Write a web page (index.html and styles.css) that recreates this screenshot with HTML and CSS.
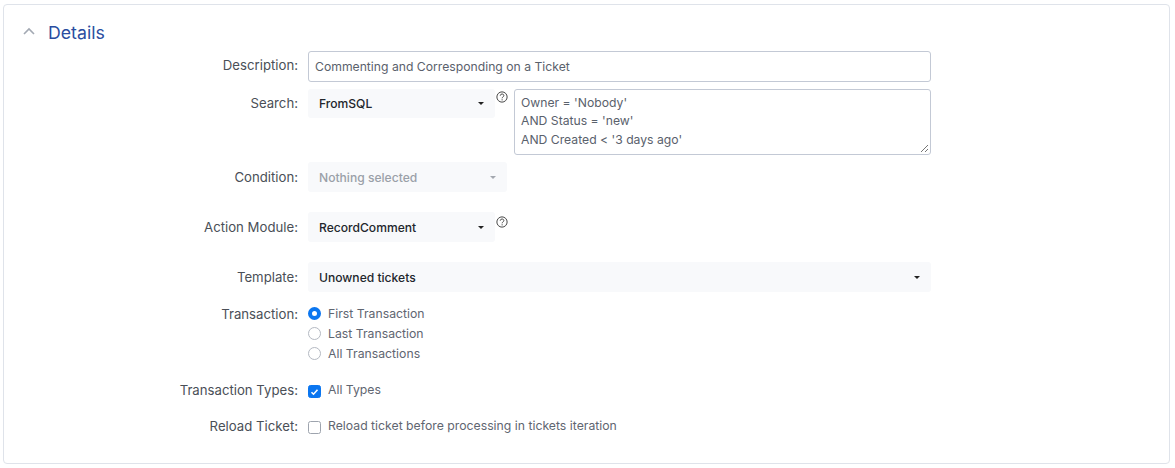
FILE: index.html
```html
<!DOCTYPE html>
<html lang="en">
<head>
<meta charset="utf-8">
<title>Details</title>
<link rel="stylesheet" href="styles.css">
</head>
<body>
<section class="card">
  <header class="card-head">
    <svg class="chev" width="14" height="9" viewBox="0 0 14 9"><path d="M2 7l5-5 5 5" fill="none" stroke="#a3a9b3" stroke-width="1.6"/></svg>
    <h2 class="title">Details</h2>
  </header>
  <div class="form">
    <div class="row row-desc">
      <div class="label">Description:</div>
      <div class="input">Commenting and Corresponding on a Ticket</div>
    </div>
    <div class="row row-search">
      <div class="label">Search:</div>
      <div class="select select-short"><span>FromSQL</span><i class="caret"></i></div>
      <svg class="help" width="12" height="12" viewBox="0 0 11 11"><circle cx="5.5" cy="5.5" r="4.7" fill="none" stroke="#444" stroke-width=".9"/><path d="M3.9 4.3c0-2.1 3.3-2 3.3-.1 0 1.2-1.6 1.2-1.6 2.5" fill="none" stroke="#444" stroke-width=".9"/><circle cx="5.6" cy="8.1" r=".6" fill="#444"/></svg>
      <div class="textarea">Owner = 'Nobody'<br>AND Status = 'new'<br>AND Created &lt; '3 days ago'
        <svg class="grip" width="9" height="9" viewBox="0 0 9 9"><path d="M1 8l7-7M5 8l3-3" stroke="#666" stroke-width=".9"/></svg>
      </div>
    </div>
    <div class="row row-cond">
      <div class="label">Condition:</div>
      <div class="select select-disabled"><span>Nothing selected</span><i class="caret"></i></div>
    </div>
    <div class="row row-action">
      <div class="label">Action Module:</div>
      <div class="select select-short select-tall"><span>RecordComment</span><i class="caret"></i></div>
      <svg class="help" width="12" height="12" viewBox="0 0 11 11"><circle cx="5.5" cy="5.5" r="4.7" fill="none" stroke="#444" stroke-width=".9"/><path d="M3.9 4.3c0-2.1 3.3-2 3.3-.1 0 1.2-1.6 1.2-1.6 2.5" fill="none" stroke="#444" stroke-width=".9"/><circle cx="5.6" cy="8.1" r=".6" fill="#444"/></svg>
    </div>
    <div class="row row-template">
      <div class="label">Template:</div>
      <div class="select select-wide"><span>Unowned tickets</span><i class="caret"></i></div>
    </div>
    <div class="row row-trans">
      <div class="label">Transaction:</div>
      <div class="options">
        <div class="option opt-first"><i class="radio radio-on"></i><span>First Transaction</span></div>
        <div class="option opt-last"><i class="radio"></i><span>Last Transaction</span></div>
        <div class="option opt-all"><i class="radio"></i><span>All Transactions</span></div>
      </div>
    </div>
    <div class="row row-types">
      <div class="label">Transaction Types:</div>
      <div class="option"><i class="check check-on"><svg width="9" height="8" viewBox="0 0 9 8"><path d="M1.5 4.2l2 2 4-4.4" fill="none" stroke="#fff" stroke-width="1.6"/></svg></i><span>All Types</span></div>
    </div>
    <div class="row row-reload">
      <div class="label">Reload Ticket:</div>
      <div class="option"><i class="check"></i><span>Reload ticket before processing in tickets iteration</span></div>
    </div>
  </div>
</section>
</body>
</html>
```
FILE: styles.css
```css
* { box-sizing: border-box; }
html, body { margin: 0; padding: 0; background: #fff; }
body {
  font-family: Inter, "Liberation Sans", sans-serif;
  font-size: 12.2px;
  color: #4b5563;
  padding: 4px 5px 4px 3px;
}
.card {
  height: 460px;
  border: 1px solid #dfe3ea;
  border-radius: 4px;
  background: #fff;
  padding: 0;
}
.card-head {
  display: flex;
  align-items: center;
  height: 46px;
  padding: 10px 0 0 18px;
}
.chev { margin-top: -4px; }
.title {
  margin: 0 0 0 12px;
  font-size: 17.7px;
  font-weight: 400;
  line-height: 22px;
  color: #2a4da0;
}
.form { padding: 0; }
.row { display: flex; align-items: flex-start; }
.label {
  width: 294px;
  flex: none;
  text-align: right;
  margin-right: 10px;
  color: #4a4f57;
  line-height: 16px;
  font-size: 13.2px;
}
.input {
  width: 623px;
  height: 31px;
  border: 1px solid #c3c9d5;
  border-radius: 3px;
  padding: 0 6px;
  line-height: 29px;
  color: #5a616c;
}
.select {
  display: flex;
  align-items: center;
  justify-content: space-between;
  height: 30px;
  padding: 0 11px 0 11px;
  background: #f8f9fb;
  border-radius: 3px;
  color: #22262c;
  font-weight: 500;
  font-size: 12.1px;
}
.select-short { width: 187px; height: 29px; }
.select-tall { height: 30px; }
.select-wide { width: 623px; }
.select-disabled { width: 199px; color: #9aa0a8; }
.select-disabled .caret { border-top-color: #a3a8af; }
.caret {
  width: 0;
  height: 0;
  border-left: 3px solid transparent;
  border-right: 3px solid transparent;
  border-top: 3px solid #222;
}
.help { margin: 3px 0 0 1px; flex: none; }
.row-desc .label { padding-top: 6px; }
.row-search { margin-top: 7px; }
.row-search .label { padding-top: 6px; }
.row-search .help { margin: 2px 6px 0 1px; }
.textarea {
  position: relative;
  width: 417px;
  height: 66px;
  border: 1px solid #c3c9d5;
  border-radius: 3px;
  padding: 4px 6px 0;
  line-height: 18.3px;
  color: #5a616c;
}
.grip { position: absolute; right: 1px; bottom: 1px; }
.row-cond { margin-top: 7px; }
.row-cond .label, .row-action .label, .row-template .label { padding-top: 7px; }
.row-action { margin-top: 20px; }
.row-action .help { margin-top: 4px; }
.row-template { margin-top: 20px; }
.row-trans { margin-top: 13px; }
.row-trans .label { padding-top: 1px; }
.options { display: flex; flex-direction: column; padding-top: 1px; }
.option { display: flex; align-items: flex-start; line-height: 16px; color: #5f6671; font-size: 12.25px; }
.opt-last { margin-top: 4px; }
.opt-all { margin-top: 4px; }
.radio {
  width: 13px;
  height: 13px;
  border: 1px solid #b4b9c2;
  border-radius: 50%;
  margin: 1px 7px 0 0;
  flex: none;
  background: #fff;
}
.radio-on { border: 4px solid #0b76f0; }
.check {
  display: flex;
  align-items: center;
  justify-content: center;
  width: 13px;
  height: 13px;
  border: 1px solid #9ea4ae;
  border-radius: 2.5px;
  margin: 3px 7px 0 0;
  flex: none;
  background: #fff;
}
.check-on { border-color: #0b76f0; background: #0b76f0; }
.row-types { margin-top: 20px; }
.row-reload { margin-top: 20px; }
```
